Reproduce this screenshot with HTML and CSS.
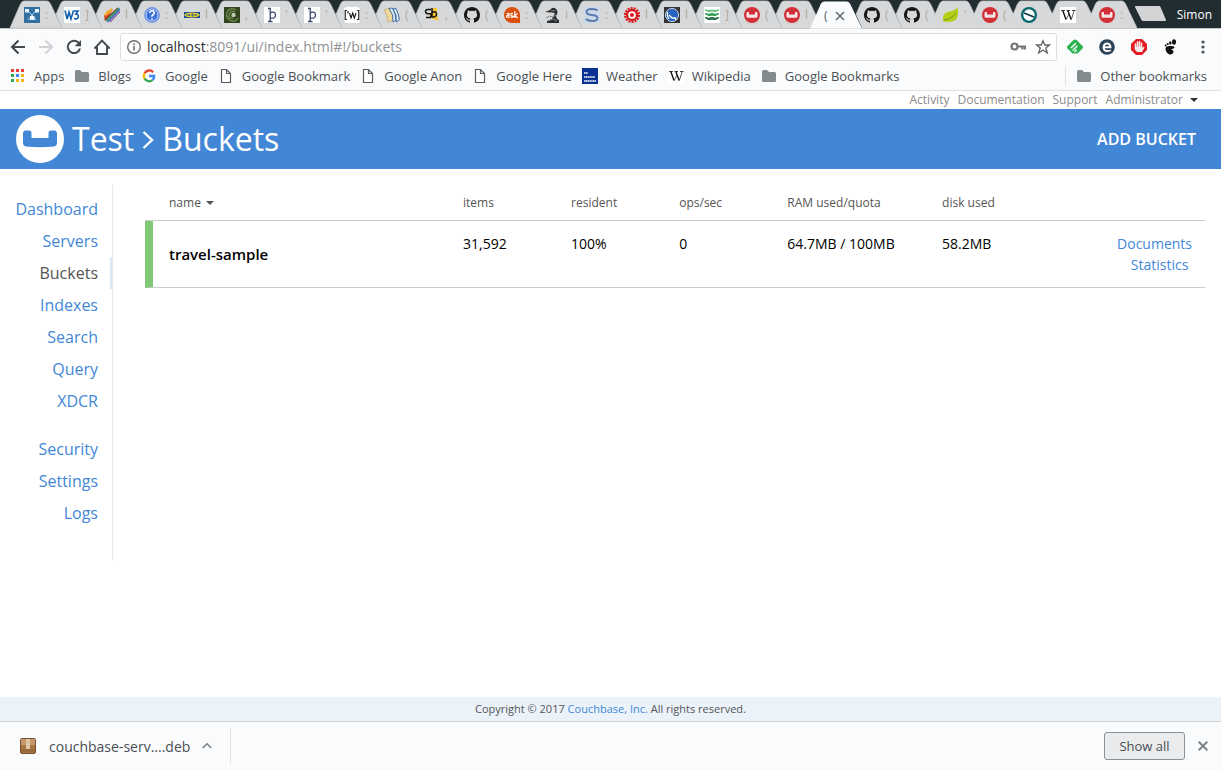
FILE: index.html
```
<!DOCTYPE html>
<html lang="en">
<head>
<meta charset="utf-8">
<title>Couchbase Console</title>
<link rel="stylesheet" href="styles.css">
</head>
<body>
<svg class="sprite" aria-hidden="true">
  <symbol id="tab" viewBox="0 0 52 28"><path d="M12 28L6 14.500L10.500 4Q12 1 14 1H37Q39 1 40.500 4L52 28Z" fill="#d7d8da"/><path d="M6 14.500L10.500 4Q12 1 14 1H37Q39 1 40.500 4L52 28" fill="none" stroke="#c3c5c7" stroke-width=".8"/></symbol>
  <symbol id="tab-first" viewBox="0 0 52 28"><path d="M0 28L10.500 4Q12 1 14 1H37Q39 1 40.500 4L52 28Z" fill="#d7d8da" stroke="#c3c5c7" stroke-width=".8"/></symbol>
  <symbol id="tab-active" viewBox="0 0 52 28"><path d="M0 28L10.500 4Q12 1 14 1H37Q39 1 40.500 4L52 28Z" fill="#fafbfd"/></symbol>
  <symbol id="github" viewBox="0 0 16 16"><path fill="#161616" d="M8 0C3.580 0 0 3.580 0 8c0 3.540 2.290 6.530 5.470 7.590.4.070.55-.17.55-.38 0-.19-.01-.82-.01-1.490-2.010.37-2.530-.49-2.690-.94-.09-.23-.48-.94-.82-1.130-.28-.15-.68-.52-.01-.53.63-.01 1.080.58 1.230.82.72 1.210 1.870.87 2.330.66.070-.52.28-.87.51-1.070-1.780-.2-3.640-.89-3.640-3.950 0-.87.31-1.590.82-2.150-.08-.2-.36-1.020.08-2.120 0 0 .67-.21 2.200.82.64-.18 1.320-.27 2-.27s1.360.09 2 .27c1.530-1.040 2.200-.82 2.200-.82.44 1.100.16 1.920.08 2.120.51.56.82 1.270.82 2.150 0 3.070-1.870 3.750-3.650 3.950.29.25.54.73.54 1.480 0 1.070-.01 1.930-.01 2.200 0 .21.15.46.55.38A8.010 8.010 0 0 0 16 8c0-4.420-3.580-8-8-8z"/></symbol>
  <symbol id="couch" viewBox="0 0 16 16"><circle cx="8" cy="8" r="8" fill="#d22f36"/><path d="M2.500 6Q2.500 5 3.500 5H5V7.500H11V5H12.500Q13.500 5 13.500 6V9.500Q13.500 10.800 12 10.800H4Q2.500 10.800 2.500 9.500Z" fill="#f3e4e6"/></symbol>
  <symbol id="thorn" viewBox="0 0 16 16"><path fill="#fff" d="M0 0h16v16H0z"/><path d="M4 1.500H6.200V14.500M4 14.500H8.500M6.200 5.500Q11.500 4 11.500 8T6.200 11" fill="none" stroke="#3c4a6e" stroke-width="1.300"/></symbol>
  <symbol id="wiki" viewBox="0 0 16 16"><path fill="#fff" d="M0 0h16v16H0z"/><path d="M1 3.500H5M6.500 3.500H10M12 3.500H15.500" stroke="#111" stroke-width=".8"/><path d="M2.800 3.500L6 12.500M7.800 3.500L11.200 12.500" stroke="#111" stroke-width="1.400"/><path d="M6.200 12.500L9 7M11.300 12.500L14.200 3.500" stroke="#111" stroke-width=".7"/></symbol>
  <symbol id="folder" viewBox="0 0 16 16"><path d="M1 3.500Q1 2 2.500 2H6L8 4H13.500Q15 4 15 5.500V12.500Q15 14 13.500 14H2.500Q1 14 1 12.500Z" fill="#848b8f"/></symbol>
  <symbol id="page" viewBox="0 0 16 16"><path d="M3.500 1.500H8.500L12.500 5.500V14.500H3.500ZM8.500 1.500V5.500H12.500" fill="#fff" stroke="#5a5d60" stroke-width="1.200"/></symbol>
</svg>
<div class="browser">
  <header class="tabstrip">
    <nav class="tabs" aria-label="Open tabs">
      <div class="tab"><svg class="shape"><use href="#tab-first"/></svg><svg class="fav" viewBox="0 0 16 16"><path fill="#346f9f" d="M0 0h16v16H0z"/><path d="M3 3L8 8L13 2.500M8 8L4 13M8 8L12 13" stroke="#a9d2ec" stroke-width="1" fill="none"/><path fill="#eaf6fd" d="M1 2h4v3.500H1zM11 2h4v3.500h-4zM6 9h4.500v4H6z"/></svg><span class="peek">:</span></div>
      <div class="tab"><svg class="shape"><use href="#tab"/></svg><svg class="fav" viewBox="0 0 16 16"><path fill="#fff" d="M0 0h16v16H0z"/><path d="M1 3.500L3.200 12L5 5L7 12L9.500 3.500M10 4H14L11.800 7Q14.800 7 14.300 9.800Q13.500 12.800 10 11.500" fill="none" stroke="#1260ac" stroke-width="1.600"/></svg><span class="peek">]</span></div>
      <div class="tab"><svg class="shape"><use href="#tab"/></svg><svg class="fav" viewBox="0 0 16 16"><path d="M1 14L0 9L3 4L9 2L5 9Z" fill="#d64f2a"/><path d="M1 8L8 2" stroke="#efb52e" stroke-width="2.500"/><path d="M1 13L14 1" stroke="#8c2e25" stroke-width="1.500"/><path d="M2 14L15 1" stroke="#2f9e55" stroke-width="1.600"/><path d="M3.500 15L16 2" stroke="#2b62b5" stroke-width="1.500"/><path d="M6 15L16 4.500" stroke="#8a5b9e" stroke-width="1.200"/></svg><span class="peek">l</span></div>
      <div class="tab"><svg class="shape"><use href="#tab"/></svg><svg class="fav" viewBox="0 0 16 16"><circle cx="8" cy="8" r="7.300" fill="#3d70d9" stroke="#7398e6" stroke-width="1.200"/><circle cx="8" cy="8" r="6" fill="none" stroke="#eef3ff" stroke-width=".8"/><path d="M5.800 6Q6 3.800 8 3.800T10.300 6Q10.300 7 9 7.800T8 9.700M8 11V12.600" fill="none" stroke="#fff" stroke-width="1.600"/></svg><span class="peek">:</span></div>
      <div class="tab"><svg class="shape"><use href="#tab"/></svg><svg class="fav" viewBox="0 0 16 16"><path fill="#164b96" d="M0 5h16v6H0z"/><ellipse cx="8" cy="8" rx="7.600" ry="2.600" fill="#f4d329"/><path d="M3 7V9M5 7V9M5.200 8L6.500 7M5.200 8L6.500 9M9.500 7H8V9H9.500M8 8H9.300M10.500 9L11.700 7L13 9" stroke="#164b96" stroke-width=".9" fill="none"/></svg><span class="peek">l</span></div>
      <div class="tab"><svg class="shape"><use href="#tab"/></svg><svg class="fav" viewBox="0 0 16 16"><path fill="#33461f" d="M0 0h16v16H0z"/><path d="M12 3Q6 0 3.300 5T6 13Q11 16 14 11M11 5Q7 3 5.500 7T9 11.500" fill="none" stroke="#6f9150" stroke-width="1.300"/><circle cx="9.500" cy="8" r="2.200" fill="#bccbab"/></svg><span class="peek">,</span></div>
      <div class="tab"><svg class="shape"><use href="#tab"/></svg><svg class="fav"><use href="#thorn"/></svg><span class="peek">'</span></div>
      <div class="tab"><svg class="shape"><use href="#tab"/></svg><svg class="fav"><use href="#thorn"/></svg><span class="peek">'</span></div>
      <div class="tab"><svg class="shape"><use href="#tab"/></svg><svg class="fav" viewBox="0 0 16 16"><rect width="16" height="16" rx="3" fill="#fff"/><path d="M2.800 3.500H1.200V12.500H2.800M13.200 3.500H14.800V12.500H13.200M4 4V6.500M5.500 6L7 11L8.700 6L10.300 11L12 6" fill="none" stroke="#111" stroke-width="1.100"/></svg><span class="peek">:</span></div>
      <div class="tab"><svg class="shape"><use href="#tab"/></svg><svg class="fav" viewBox="0 0 16 16"><path d="M0 3L5 1L8 6L9 13L4 15L3 8Z" fill="#f1d99b" stroke="#b59d60" stroke-width=".6"/><path d="M5 1.500L8.500 1L11 7L12 13L9 15L8.500 8Z" fill="#dfe8f2" stroke="#3567a2" stroke-width=".9"/><path d="M9 2L12 1.500L14.500 8L15.300 13L12.300 15L12 8Z" fill="#edf2f6" stroke="#245c9f" stroke-width=".9"/></svg><span class="peek">(</span></div>
      <div class="tab"><svg class="shape"><use href="#tab"/></svg><svg class="fav" viewBox="0 0 16 16"><path d="M9 1H13V6L14 12L15 14L9 12L5 9Z" fill="#f4c431"/><path d="M7 2.500H4Q1.500 2.500 1.500 4.500T4 6.700H6.500Q8 8 6.500 10.500H2M8 1V10.500M8 5.500Q12.500 3.500 12.500 7T8 10" fill="none" stroke="#111" stroke-width="1.500"/></svg><span class="peek">,</span></div>
      <div class="tab"><svg class="shape"><use href="#tab"/></svg><svg class="fav"><use href="#github"/></svg><span class="peek">(</span></div>
      <div class="tab"><svg class="shape"><use href="#tab"/></svg><svg class="fav" viewBox="0 0 16 16"><path d="M8 0A8 8 0 1 0 8 16H16V8A8 8 0 0 0 8 0Z" fill="#dd4f0d"/><path d="M2.800 7Q5 5.500 5 7.500V10.500M5 8.500Q2.500 8 2.500 9.500T5 10M9 6.700Q6.500 6 6.700 7.500T9 9.200T6.500 10.400M10.800 4V11M13.500 6.500L11 8.500L13.700 11" fill="none" stroke="#fff" stroke-width="1.200"/></svg><span class="peek">:</span></div>
      <div class="tab"><svg class="shape"><use href="#tab"/></svg><svg class="fav" viewBox="0 0 16 16"><path d="M1 5L6 3Q9-1 12 2Q15 5 12 9L13 12L15 13V16H3V14L8 12L11 6L7 5.500Z" fill="#2a2c2d"/><path d="M2 11Q5 8 9 10L12 8M4 14L9 12L13 14M7 4L11 3.500" stroke="#85898b" fill="none"/></svg><span class="peek">i</span></div>
      <div class="tab"><svg class="shape"><use href="#tab"/></svg><svg class="fav" viewBox="0 0 16 16"><path fill="#cad8e8" d="M0 0h16v16H0z"/><path d="M13.500 3.500Q12 2 8 2Q2.500 2 2.500 5Q2.500 7.500 8 8Q13.500 8.500 13.500 11Q13.500 14 8 14Q4 14 2 12" fill="none" stroke="#5878ac" stroke-width="1.900"/></svg><span class="peek">:</span></div>
      <div class="tab"><svg class="shape"><use href="#tab"/></svg><svg class="fav" viewBox="0 0 16 16"><circle cx="8" cy="8" r="7" fill="none" stroke="#d6171c" stroke-width="2" stroke-dasharray="2 1.140"/><circle cx="8" cy="8" r="5" fill="#fff" stroke="#d6171c" stroke-width="2.300"/><circle cx="8" cy="8" r="2" fill="#d6171c"/></svg><span class="peek">l</span></div>
      <div class="tab"><svg class="shape"><use href="#tab"/></svg><svg class="fav" viewBox="0 0 16 16"><path fill="#343434" d="M0 0h16v16H0z"/><circle cx="8" cy="8" r="6.600" fill="#2663bd" stroke="#c6d3e6"/><path d="M3.500 5V9L5 12M5 8L8 11H11.500L12 13" fill="none" stroke="#fff" stroke-width="1.300"/></svg><span class="peek">l</span></div>
      <div class="tab"><svg class="shape"><use href="#tab"/></svg><svg class="fav" viewBox="0 0 16 16"><path fill="#fff" d="M0 0h16v16H0z"/><path d="M1 3Q5 6 8 4Q11 6 15 3Q11 4 8 3Q5 4 1 3Z" fill="#65bd76" stroke="#65bd76"/><path d="M1 6.500Q5 10 8 8Q11 10 15 6.500Q11 8 8 6.500Q5 8 1 6.500Z" fill="#2c9950" stroke="#2c9950"/><path d="M1 10.500Q5 14 8 12Q11 14 15 10.500Q11 12 8 10.500Q5 12 1 10.500Z" fill="#176b3d" stroke="#176b3d"/></svg><span class="peek">]</span></div>
      <div class="tab"><svg class="shape"><use href="#tab"/></svg><svg class="fav"><use href="#couch"/></svg><span class="peek">(</span></div>
      <div class="tab"><svg class="shape"><use href="#tab"/></svg><svg class="fav"><use href="#couch"/></svg><span class="peek">l</span></div>
      <div class="tab active"><svg class="shape"><use href="#tab-active"/></svg><span class="peek">(</span><button class="close" aria-label="Close tab"><svg viewBox="0 0 10 10"><path d="M1 1L9 9M9 1L1 9" stroke="#6a6f73" stroke-width="1.700"/></svg></button></div>
      <div class="tab"><svg class="shape"><use href="#tab"/></svg><svg class="fav"><use href="#github"/></svg><span class="peek">(</span></div>
      <div class="tab tight"><svg class="shape"><use href="#tab"/></svg><svg class="fav"><use href="#github"/></svg><span class="peek">(</span></div>
      <div class="tab tight"><svg class="shape"><use href="#tab"/></svg><svg class="fav" viewBox="0 0 16 16"><path d="M14.500 0Q17 13 9 14.500Q3 15.500 0 14Q-1 6 6 4.500Q12 4 14.500 0Z" fill="#b5cf19"/><path d="M1 13Q9 12 13 6" fill="none" stroke="#6d9415"/></svg><span class="peek">'</span></div>
      <div class="tab tight"><svg class="shape"><use href="#tab"/></svg><svg class="fav"><use href="#couch"/></svg><span class="peek">(</span></div>
      <div class="tab tight"><svg class="shape"><use href="#tab"/></svg><svg class="fav" viewBox="0 0 16 16"><circle cx="8" cy="8" r="8" fill="#08686b"/><circle cx="8" cy="8" r="5.700" fill="#fff"/><path d="M3 6L13 10" stroke="#08383b" stroke-width="1.800"/></svg></div>
      <div class="tab tight"><svg class="shape"><use href="#tab"/></svg><svg class="fav"><use href="#wiki"/></svg></div>
      <div class="tab"><svg class="shape"><use href="#tab"/></svg><svg class="fav"><use href="#couch"/></svg><span class="peek">:</span></div>
    </nav>
    <button class="newtab" aria-label="New tab"><svg viewBox="0 0 33 16"><path d="M1.500 0H25Q26 0 26.500 1L32 14Q32.300 15 31 15H9Q8 15 7.500 14L1 1Q.7 0 1.500 0Z" fill="#d2d4d6"/></svg></button>
    <button class="profile">Simon</button>
  </header>
  <div class="toolbar">
    <button aria-label="Back"><svg viewBox="0 0 16 16"><path d="M15 8H2M8.500 1.500L2 8L8.500 14.500" fill="none" stroke="#43484c" stroke-width="2"/></svg></button>
    <button aria-label="Forward"><svg viewBox="0 0 16 16"><path d="M1 8H14M7.500 1.500L14 8L7.500 14.500" fill="none" stroke="#cfd1d3" stroke-width="2"/></svg></button>
    <button aria-label="Reload"><svg viewBox="0 0 16 16"><path d="M13 4.200A6.200 6.200 0 1 0 14 9.500" fill="none" stroke="#43484c" stroke-width="2"/><path d="M15 1V7.300H8.700Z" fill="#43484c"/></svg></button>
    <button aria-label="Home"><svg viewBox="0 0 16 16"><path d="M1 8.800L8 1.600L15 8.800H13V15H3V8.800Z" fill="none" stroke="#43484c" stroke-width="1.900"/></svg></button>
    <div class="address">
      <svg viewBox="0 0 16 16"><circle cx="8" cy="8" r="6.300" fill="none" stroke="#6a6e72" stroke-width="1.400"/><path d="M8 7V11.500M8 4.300V6" stroke="#6a6e72" stroke-width="1.600"/></svg>
      <p class="url"><span>localhost</span>:8091/ui/index.html#!/buckets</p>
      <svg viewBox="0 0 16 16"><circle cx="4.500" cy="7.500" r="3" fill="none" stroke="#72777b" stroke-width="2.200"/><path d="M7.500 7.500H15V10.500M12.500 7.500V10.500" fill="none" stroke="#72777b" stroke-width="2.200"/></svg>
      <svg class="star" viewBox="0 0 16 16"><path d="M8 1.700L9.800 6H14.500L10.800 9L12.300 14L8 11L3.700 14L5.200 9L1.500 6H6.200Z" fill="none" stroke="#5f6468" stroke-width="1.300"/></svg>
    </div>
    <div class="extensions">
      <button aria-label="Feedly"><svg viewBox="0 0 16 16"><path d="M6.500 1Q8 0 9.500 1L15.500 7Q16.500 8 15.500 9.500L10.500 14.500H5.500L0.500 9.500Q-.5 8 .5 7Z" fill="#2bb24c"/><path d="M4 9L8.800 4.200M5.700 11.500L10.200 7M7.500 13L9.800 10.700" stroke="#fff" stroke-width="1.400"/></svg></button>
      <button aria-label="Reader"><svg viewBox="0 0 16 16"><circle cx="8" cy="8" r="7.800" fill="#2d4458"/><path d="M4.500 8.300H11.500Q11 4.500 8 4.500T4.500 8.300Q5 12 8.200 12T11.300 10.800" fill="none" stroke="#fff" stroke-width="1.900"/></svg></button>
      <button aria-label="Ad blocker"><svg viewBox="0 0 16 16"><path d="M5 0H11L16 5V11L11 16H5L0 11V5Z" fill="#e21a22"/><path d="M4.500 9V5M6.500 8V3M8.500 8V2.500M10.500 8V4" stroke="#f5eeee" stroke-width="1.500" stroke-linecap="round"/><path d="M3.800 7.500H11.200V9L13 7.500L13.500 8.500L11 13H6L3.800 10.500Z" fill="#f5eeee"/></svg></button>
      <button aria-label="GNOME"><svg viewBox="0 0 16 16"><path d="M2.500 10.500Q2 7 6.500 7Q12 6.500 11.500 8.500Q11 9.500 8.800 10Q8 11 9.500 11.200Q10.800 11.500 10.500 13Q9.500 16 6.500 15.500Q3.500 14.500 2.500 10.500Z" fill="#111"/><ellipse cx="11" cy="3" rx="2" ry="2.800" fill="#111"/><ellipse cx="7.300" cy="4" rx="1.200" ry="1.700" fill="#111"/><circle cx="4.700" cy="5" r="1.100" fill="#111"/><circle cx="2.700" cy="6.600" r="1" fill="#111"/></svg></button>
      <button aria-label="Menu"><svg viewBox="0 0 16 16"><circle cx="8" cy="3" r="1.600" fill="#4c5155"/><circle cx="8" cy="8" r="1.600" fill="#4c5155"/><circle cx="8" cy="13" r="1.600" fill="#4c5155"/></svg></button>
    </div>
  </div>
  <nav class="bookmarks" aria-label="Bookmarks">
    <a href="#"><svg viewBox="0 0 16 16"><path fill="#ea3c34" d="M1 1h3v3H1zM6 1h3v3H6zM11 1h3v3h-3z"/><path fill="#34a853" d="M1 6h3v3H1zM1 11h3v3H1z"/><path fill="#4285f4" d="M6 6h3v3H6z"/><path fill="#fbb30a" d="M11 6h3v3h-3zM6 11h3v3H6zM11 11h3v3h-3z"/></svg>Apps</a>
    <a href="#"><svg><use href="#folder"/></svg>Blogs</a>
    <a href="#"><svg viewBox="0 0 16 16"><path d="M12.200 4.300A5.200 5.200 0 0 0 3.600 5.300" fill="none" stroke="#ea4335" stroke-width="2.300"/><path d="M3.600 5.300A5.200 5.200 0 0 0 3.600 10.700" fill="none" stroke="#fbbc05" stroke-width="2.300"/><path d="M3.600 10.700A5.200 5.200 0 0 0 11.500 12" fill="none" stroke="#34a853" stroke-width="2.300"/><path d="M11.500 12A5 5 0 0 0 13.200 8H8" fill="none" stroke="#4285f4" stroke-width="2.300"/></svg>Google</a>
    <a href="#"><svg><use href="#page"/></svg>Google Bookmark</a>
    <a href="#"><svg><use href="#page"/></svg>Google Anon</a>
    <a href="#"><svg><use href="#page"/></svg>Google Here</a>
    <a href="#"><svg viewBox="0 0 16 16"><path fill="#0b3292" d="M0 0h16v16H0z"/><path d="M2 5H6M2 9H13M2 13H14" stroke="#b9c5e4" stroke-width="1.800" stroke-dasharray="1.500 .3"/></svg>Weather</a>
    <a href="#"><svg><use href="#wiki"/></svg>Wikipedia</a>
    <a href="#"><svg><use href="#folder"/></svg>Google Bookmarks</a>
    <a href="#" class="other"><svg><use href="#folder"/></svg>Other bookmarks</a>
  </nav>
  <div class="console">
    <nav class="account">
      <a href="#">Activity</a><a href="#">Documentation</a><a href="#">Support</a>
      <button>Administrator<i class="caret"></i></button>
    </nav>
    <header class="banner">
      <svg class="logo" viewBox="0 0 48 48"><circle cx="24" cy="24" r="24" fill="#fff"/><path d="M7 19Q7 15.500 9.500 15.500H13Q15.500 15.500 15.500 18V23H32.500V18Q32.500 15.500 35 15.500H38.500Q41 15.500 41 19V28Q41 31 38 31.500Q24 33 10 31.500Q7 31 7 28Z" fill="#4287d6"/></svg>
      <h1>Test<svg viewBox="0 0 12 20"><path d="M1.500 3L10 11L1.500 19" fill="none" stroke="#fff" stroke-width="2.400"/></svg>Buckets</h1>
      <button class="add">ADD BUCKET</button>
    </header>
    <div class="body">
      <nav class="side">
        <a href="#">Dashboard</a>
        <a href="#">Servers</a>
        <a href="#" class="current">Buckets</a>
        <a href="#">Indexes</a>
        <a href="#">Search</a>
        <a href="#">Query</a>
        <a href="#">XDCR</a>
        <a href="#" class="group">Security</a>
        <a href="#">Settings</a>
        <a href="#">Logs</a>
      </nav>
      <main>
        <table>
          <thead><tr><th class="name">name<i class="caret"></i></th><th class="num">items</th><th class="num">resident</th><th class="num">ops/sec</th><th class="ram">RAM used/quota</th><th class="num">disk used</th><th class="actions"></th></tr></thead>
          <tbody><tr><td class="name">travel-sample</td><td>31,592</td><td>100%</td><td>0</td><td>64.7MB / 100MB</td><td>58.2MB</td><td class="actions"><a href="#">Documents</a><br><a href="#">Statistics</a>&nbsp;</td></tr></tbody>
        </table>
      </main>
    </div>
    <footer>Copyright © 2017 <a href="#">Couchbase, Inc.</a> All rights reserved.</footer>
  </div>
  <div class="downloads">
    <button class="item">
      <svg class="box" viewBox="0 0 16 16"><rect x=".5" y=".5" width="15" height="15" rx="1.500" fill="#a87644" stroke="#71502f"/><path fill="#c49a6b" d="M1 1h14v6H1z"/><path fill="#dcc6a6" d="M6 1h4v10H6z"/><path fill="#8b5c2f" d="M1 11h14v3H1z" opacity=".5"/></svg>
      <span>couchbase-serv....deb</span>
      <svg class="up" viewBox="0 0 10 10"><path d="M0.800 7L5 2.800L9.200 7" fill="none" stroke="#7d8285" stroke-width="1.600"/></svg>
    </button>
    <button class="showall">Show all</button>
    <button class="close" aria-label="Close downloads"><svg viewBox="0 0 10 10"><path d="M0.700 0.700L9.300 9.300M9.300 0.700L0.700 9.300" stroke="#7d8386" stroke-width="2"/></svg></button>
  </div>
</div>
</body>
</html>
```
FILE: styles.css
```
* { box-sizing: border-box; }
body { margin: 0; background: #fff; color: #000; font-family: "Open Sans", "Noto Sans", sans-serif; }
button { margin: 0; padding: 0; border: 0; background: none; color: inherit; font: inherit; }
a { color: #4287d6; text-decoration: none; }
svg { display: block; flex: none; }
.sprite { position: absolute; width: 0; height: 0; }
.browser { display: flex; flex-direction: column; min-height: 100vh; }

.tabstrip { display: flex; align-items: center; height: 29px; padding: 0 9px 0 10px; background: #222d32; border-bottom: 1px solid #c5c7c9; }
.tabs { display: flex; }
.tab { position: relative; display: flex; align-items: center; gap: 5px; width: 52px; height: 28px; padding: 2px 0 0 14px; margin-right: -12px; }
.tab.tight { margin-right: -13px; }
.tab.active { z-index: 1; height: 29px; margin-bottom: -1px; }
.shape { position: absolute; inset: 0; width: 100%; height: 100%; }
.fav { position: relative; width: 16px; height: 16px; }
.peek { position: relative; color: #b5a895; font-size: 12px; line-height: 16px; }
.tab.active .peek { color: #4d5a66; }
.tab .close { position: relative; margin-left: 2px; }
.close svg { width: 10px; height: 10px; }
.newtab { margin-left: 9px; }
.newtab svg { width: 33px; height: 16px; }
.profile { margin-left: auto; color: #fff; font-size: 12px; }

.toolbar { display: flex; align-items: center; gap: 12px; height: 36px; padding: 0 10px; background: #fafbfd; }
.toolbar svg { width: 16px; height: 16px; }
.address { display: flex; flex: 1; align-items: center; height: 28px; padding: 0 5px; margin-left: -2px; border: 1px solid #dcdee0; border-radius: 3px; background: #fff; }
.url { flex: 1; margin: 0 5px; color: #8e9295; font-size: 14px; line-height: 20px; }
.url span { color: #2c2f31; }
.address .star { margin-left: 9px; }
.extensions { display: flex; gap: 16px; margin-left: -2px; }

.bookmarks { display: flex; align-items: center; gap: 10px; height: 26px; padding: 0 14px 3px 10px; background: #fafbfd; border-bottom: 1px solid #dfe1e3; }
.bookmarks a { display: flex; align-items: center; gap: 8px; color: #4b4f52; font-size: 13px; line-height: 18px; white-space: nowrap; }
.bookmarks svg { width: 16px; height: 16px; }
.bookmarks .other { margin-left: auto; padding-left: 10px; border-left: 1px solid #dfe1e3; }

.console { display: flex; flex: 1; flex-direction: column; }
.account { display: flex; justify-content: flex-end; align-items: center; gap: 8px; height: 18px; padding-right: 23px; font-size: 12px; line-height: 18px; }
.account a, .account button { color: #8b8b8b; }
.caret { display: inline-block; margin-left: 7px; border: 4px solid transparent; border-top: 4px solid #333; border-bottom: 0; vertical-align: 2px; }
.banner { display: flex; align-items: center; height: 60px; padding: 0 25px 0 16px; background: #4287d6; color: #fff; }
.logo { width: 48px; height: 48px; }
h1 { display: flex; align-items: center; gap: 8px; margin: 0 0 0 8px; font-size: 32px; font-weight: 400; line-height: 48px; }
h1 svg { width: 12px; height: 20px; }
.add { margin-left: auto; font-size: 16px; font-weight: 600; }

.body { display: flex; flex: 1; align-items: flex-start; padding: 16px 16px 0 0; }
.side { display: flex; flex: none; flex-direction: column; width: 113px; padding: 8px 0 32px; border-right: 1px solid #e6e8ea; font-size: 16px; line-height: 32px; text-align: right; }
.side a { padding-right: 14px; }
.side .current { padding-right: 12px; border-right: 2px solid #dbe7f6; color: #555; }
.side .group { margin-top: 16px; }
main { flex: 1; margin-left: 32px; }
table { width: 100%; border-collapse: separate; border-spacing: 0; table-layout: fixed; }
th { height: 36px; padding: 0; border-bottom: 1px solid #ccc; color: #555; font-size: 12px; font-weight: 400; text-align: left; }
td { padding: 12px 0; border-bottom: 1px solid #ccc; font-size: 14px; line-height: 21px; vertical-align: top; }
th.name { width: 30%; padding-left: 24px; }
th .caret { margin-left: 5px; border-top-color: #555; }
th.num { width: 10.2%; }
th.ram { width: 14.6%; }
td.name { padding-left: 16px; border-left: 8px solid #80c778; font-size: 15px; font-weight: 600; vertical-align: middle; }
td.actions { padding-right: 13px; text-align: right; }
footer { background: #ebf2fa; color: #555; font-size: 11px; line-height: 24px; text-align: center; }

.downloads { display: flex; align-items: center; height: 49px; padding-right: 13px; border-top: 1px solid #ced1d3; background: #fafbfd; color: #4b4f52; }
.item { display: flex; align-items: center; height: 36px; padding: 0 18px 0 20px; border-right: 1px solid #dfe1e3; font-size: 14px; }
.item span { margin: 0 12px 0 13px; }
.box { width: 16px; height: 16px; }
.up { width: 10px; height: 10px; }
.showall { width: 81px; height: 28px; margin: 0 13px 0 auto; border: 1px solid #8c9194; border-radius: 3px; background: #e9ebed; font-size: 13px; }
```
